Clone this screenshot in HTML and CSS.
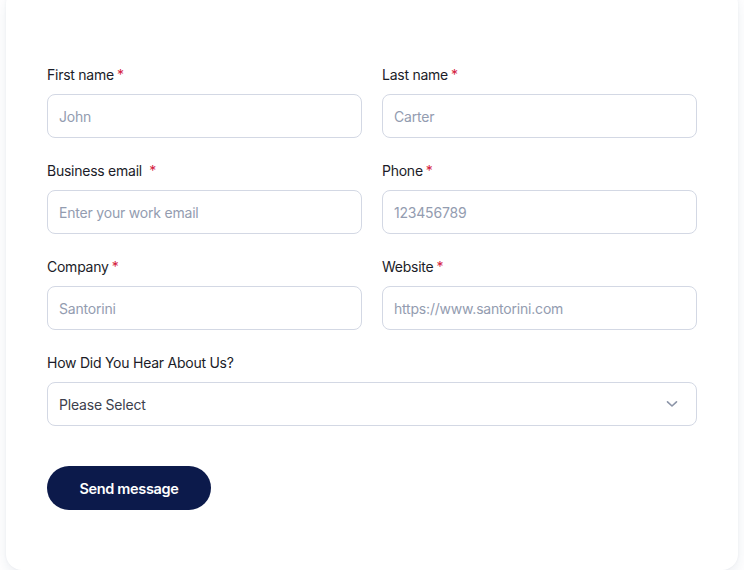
FILE: index.html
```html
<!DOCTYPE html>
<html lang="en">
<head>
<meta charset="utf-8">
<title>Contact form</title>
<link rel="stylesheet" href="styles.css">
</head>
<body>
<div class="card">
  <form class="form">
    <div class="field">
      <label class="label">First name<span class="req">*</span></label>
      <input class="input" type="text" placeholder="John">
    </div>
    <div class="field">
      <label class="label">Last name<span class="req">*</span></label>
      <input class="input" type="text" placeholder="Carter">
    </div>
    <div class="field">
      <label class="label">Business email &nbsp;<span class="req nogap">*</span></label>
      <input class="input" type="email" placeholder="Enter your work email">
    </div>
    <div class="field">
      <label class="label">Phone<span class="req">*</span></label>
      <input class="input" type="text" placeholder="123456789">
    </div>
    <div class="field">
      <label class="label">Company<span class="req">*</span></label>
      <input class="input" type="text" placeholder="Santorini">
    </div>
    <div class="field">
      <label class="label">Website<span class="req">*</span></label>
      <input class="input" type="text" placeholder="https://www.santorini.com">
    </div>
    <div class="field full">
      <label class="label">How Did You Hear About Us?</label>
      <div class="select">
        <span>Please Select</span>
        <svg width="12" height="8" viewBox="0 0 12 8" fill="none"><path d="M1.5 1.8L6 6l4.5-4.2" stroke="#8c95a8" stroke-width="1.6" stroke-linecap="round" stroke-linejoin="round"/></svg>
      </div>
    </div>
    <div class="actions full">
      <button class="btn" type="button">Send message</button>
    </div>
  </form>
</div>
</body>
</html>
```
FILE: styles.css
```css
html, body {
  margin: 0;
  padding: 0;
  background: #ffffff;
}
body {
  font-family: Inter, "Noto Sans", sans-serif;
  overflow: hidden;
}
.card {
  margin: -12px 6px 0 6px;
  background: #fff;
  border-radius: 16px;
  box-shadow: 0 6px 14px rgba(30, 50, 100, 0.08), 0 0 3px rgba(30, 50, 100, 0.05);
  padding: 77px 41px 60px 41px;
}
.form {
  display: grid;
  grid-template-columns: 1fr 1fr;
  column-gap: 20px;
  row-gap: 23px;
}
.field {
  display: flex;
  flex-direction: column;
}
.full {
  grid-column: 1 / -1;
}
.label {
  font-size: 14px;
  line-height: 20px;
  color: #1b1c28;
  margin-bottom: 9px;
  letter-spacing: -0.25px;
}
.req {
  color: #d4213d;
  margin-left: 3px;
}
.req.nogap {
  margin-left: 0;
}
.input, .select {
  box-sizing: border-box;
  height: 44px;
  border: 1px solid #d3d8e4;
  border-radius: 8px;
  padding: 0 11px;
  font-family: Inter, "Noto Sans", sans-serif;
  font-size: 14px;
  letter-spacing: -0.2px;
  color: #1b1c28;
  background: #fff;
  outline: none;
  width: 100%;
}
.input::placeholder {
  color: #939cb0;
}
.select {
  display: flex;
  align-items: center;
  justify-content: space-between;
  color: #3c404c;
  padding-right: 18px;
}
.actions {
  padding-top: 17px;
}
.btn {
  height: 44px;
  width: 164px;
  border: none;
  border-radius: 22px;
  background: #0c1a4b;
  color: #fff;
  font-family: Inter, "Noto Sans", sans-serif;
  font-size: 14.5px;
  font-weight: 600;
  letter-spacing: -0.35px;
}
```
